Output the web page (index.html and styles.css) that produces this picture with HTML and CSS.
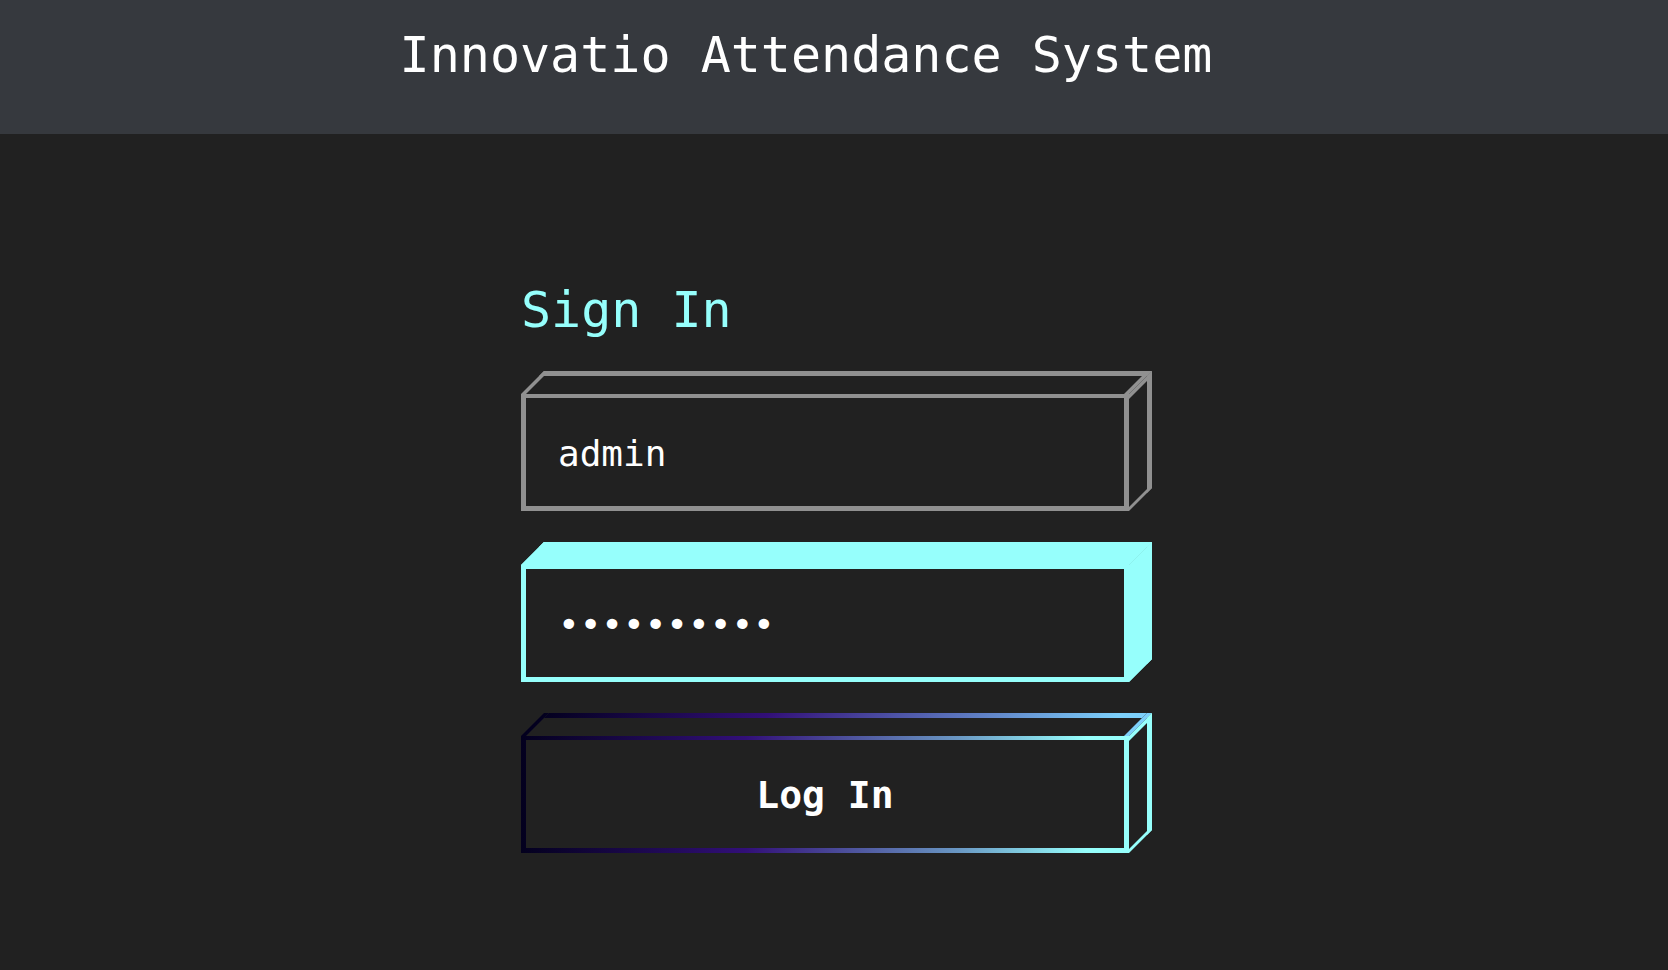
FILE: index.html
```html
<!DOCTYPE html>
<html lang="en">
<head>
<meta charset="utf-8">
<title>Innovatio Attendance System</title>
<link rel="stylesheet" href="styles.css">
</head>
<body>
<header class="banner">
  <h1 class="banner-title">Innovatio Attendance System</h1>
</header>
<main class="content">
  <form class="signin">
    <h2 class="signin-title">Sign In</h2>
    <div class="block">
      <span class="face face-top"></span>
      <span class="face face-side"></span>
      <input class="front" type="text" name="username" value="admin" aria-label="Username">
    </div>
    <div class="block block-active">
      <span class="face face-top"></span>
      <span class="face face-side"></span>
      <input class="front" type="password" name="password" value="attendance" aria-label="Password">
    </div>
    <div class="block block-submit">
      <span class="face face-top"></span>
      <span class="face face-side"></span>
      <button class="front" type="button">Log In</button>
    </div>
  </form>
</main>
</body>
</html>
```
FILE: styles.css
```css
* {
  box-sizing: border-box;
}

body {
  margin: 0;
  min-height: 100vh;
  background: #212121;
  color: #fff;
  font-family: "DejaVu Sans Mono", monospace;
}

.banner {
  padding: 28px 56px 52px 0;
  background: #36393e;
  text-align: center;
}

.banner-title,
.signin-title {
  margin: 0;
  font-size: 50px;
  font-weight: 400;
  line-height: 54px;
}

.content {
  display: flex;
  justify-content: center;
  padding: 149px 16px 48px 21px;
}

.signin {
  display: flex;
  flex-direction: column;
  gap: 31px;
  width: 100%;
  max-width: 631px;
}

.signin-title {
  margin-bottom: 3px;
  color: #96fffc;
}

.block {
  --depth: 23px;
  --edge: #909090;
  position: relative;
  padding: var(--depth) var(--depth) 0 0;
}

.front {
  display: block;
  width: 100%;
  height: 117px;
  margin: 0;
  padding: 2px 32px 0;
  border: 5px solid var(--edge);
  border-top-width: 4px;
  border-radius: 0;
  outline: 0;
  background: transparent;
  color: #fff;
  font-family: inherit;
  font-size: 36px;
}

.face {
  position: absolute;
  border: 5px solid var(--edge);
}

.face-top {
  top: 0;
  left: 0;
  right: var(--depth);
  height: var(--depth);
  border-bottom: 0;
  transform: skewX(-45deg);
  transform-origin: left bottom;
}

.face-side {
  top: var(--depth);
  right: 0;
  bottom: 0;
  width: var(--depth);
  border-left: 0;
  border-bottom-width: 4px;
  transform: skewY(-45deg);
  transform-origin: left top;
}

.block-active {
  --edge: #96fffc;
}

.block-active .face {
  background: #96fffc;
}

.block-submit .face-top,
.block-submit .front {
  border-image: linear-gradient(to right, #03001e, #320f78 37%, #6a98c4 72%, #96fffc 93%) 5;
}

.block-submit .face-top {
  border-image-source: linear-gradient(to right, #03001e, #320f78 37%, #5f7fc4 72%, #7dd0fb 95%);
}

.block-submit .face-side {
  border-color: #96fffc;
}

.block-submit .front {
  font-size: 38px;
  font-weight: 700;
  cursor: pointer;
}
```
